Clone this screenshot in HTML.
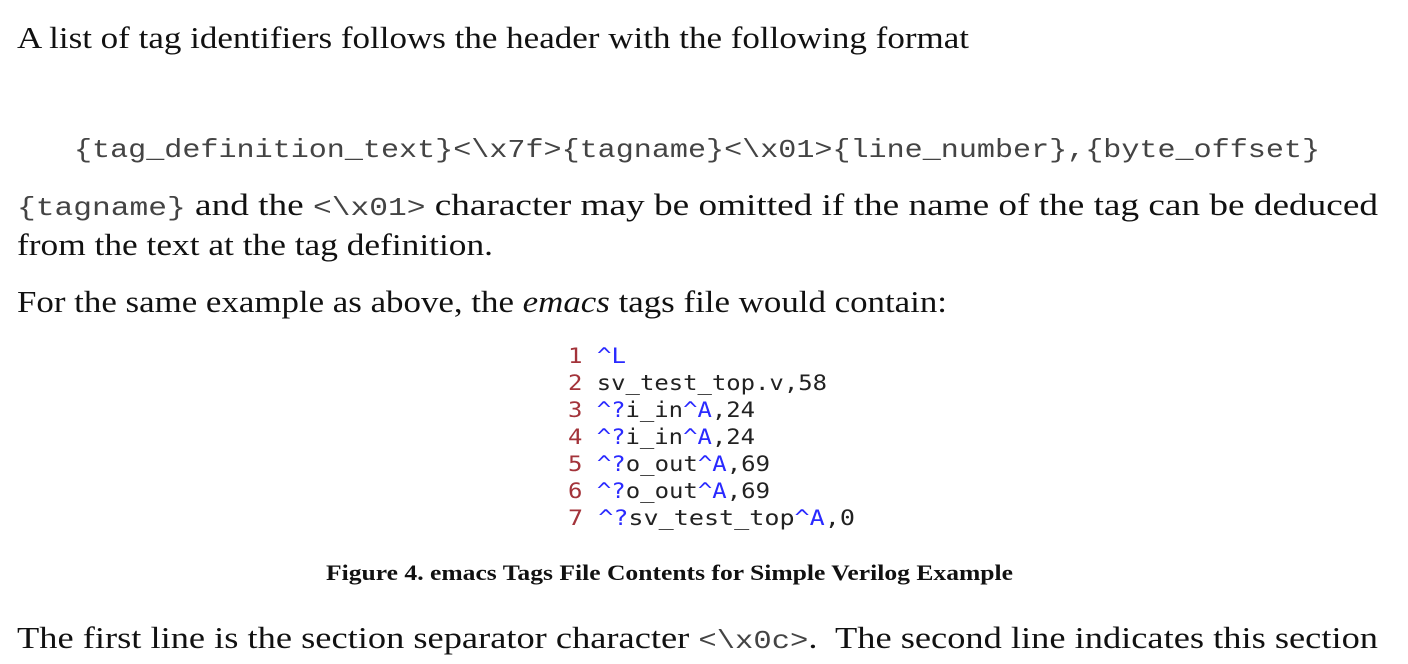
<!DOCTYPE html>
<html><head><meta charset="utf-8"><style>
html,body{margin:0;padding:0;background:#fff;width:1408px;height:664px;overflow:hidden}
svg{display:block}
.s{font-family:"Liberation Serif",serif;font-size:31px;fill:#111}
.m{font-family:"Liberation Mono",monospace;font-size:26px;fill:#444}
.c{font-family:"DejaVu Sans Mono",monospace;font-size:21px;fill:#222}
.n{fill:#a3333a}.b{fill:#2a2aff}
</style></head><body>
<svg width="1408" height="664" xmlns="http://www.w3.org/2000/svg" xml:space="preserve">
<text class="s" x="17" y="48" textLength="952" lengthAdjust="spacingAndGlyphs">A list of tag identifiers follows the header with the following format</text>
<text class="m" x="74" y="157" textLength="1246" lengthAdjust="spacingAndGlyphs">{tag_definition_text}&lt;\x7f&gt;{tagname}&lt;\x01&gt;{line_number},{byte_offset}</text>
<text class="s" x="17" y="215" textLength="1361" lengthAdjust="spacingAndGlyphs"><tspan class="m" style="font-size:26px">{tagname}</tspan> and the <tspan class="m" style="font-size:26px">&lt;\x01&gt;</tspan> character may be omitted if the name of the tag can be deduced</text>
<text class="s" x="17" y="255" textLength="476" lengthAdjust="spacingAndGlyphs">from the text at the tag definition.</text>
<text class="s" x="17" y="312" textLength="930" lengthAdjust="spacingAndGlyphs">For the same example as above, the <tspan font-style="italic">emacs</tspan> tags file would contain:</text>
<g class="c">
<text x="568" y="363" textLength="58" lengthAdjust="spacingAndGlyphs"><tspan class="n">1</tspan> <tspan class="b">^L</tspan></text>
<text x="568" y="390" textLength="259" lengthAdjust="spacingAndGlyphs"><tspan class="n">2</tspan> sv_test_top.v,58</text>
<text x="568" y="417" textLength="187" lengthAdjust="spacingAndGlyphs"><tspan class="n">3</tspan> <tspan class="b">^?</tspan>i_in<tspan class="b">^A</tspan>,24</text>
<text x="568" y="444" textLength="187" lengthAdjust="spacingAndGlyphs"><tspan class="n">4</tspan> <tspan class="b">^?</tspan>i_in<tspan class="b">^A</tspan>,24</text>
<text x="568" y="471" textLength="202" lengthAdjust="spacingAndGlyphs"><tspan class="n">5</tspan> <tspan class="b">^?</tspan>o_out<tspan class="b">^A</tspan>,69</text>
<text x="568" y="498" textLength="202" lengthAdjust="spacingAndGlyphs"><tspan class="n">6</tspan> <tspan class="b">^?</tspan>o_out<tspan class="b">^A</tspan>,69</text>
<text x="568" y="525" textLength="287" lengthAdjust="spacingAndGlyphs"><tspan class="n">7</tspan> <tspan class="b">^?</tspan>sv_test_top<tspan class="b">^A</tspan>,0</text>
</g>
<text x="326" y="580" style="font-family:'Liberation Serif',serif;font-weight:bold;font-size:22px;fill:#111" textLength="687" lengthAdjust="spacingAndGlyphs">Figure 4. emacs Tags File Contents for Simple Verilog Example</text>
<text class="s" x="17" y="648" textLength="1361" lengthAdjust="spacingAndGlyphs">The first line is the section separator character <tspan class="m" style="font-size:26px">&lt;\x0c&gt;</tspan>.&#160; The second line indicates this section</text>
</svg>
</body></html>
